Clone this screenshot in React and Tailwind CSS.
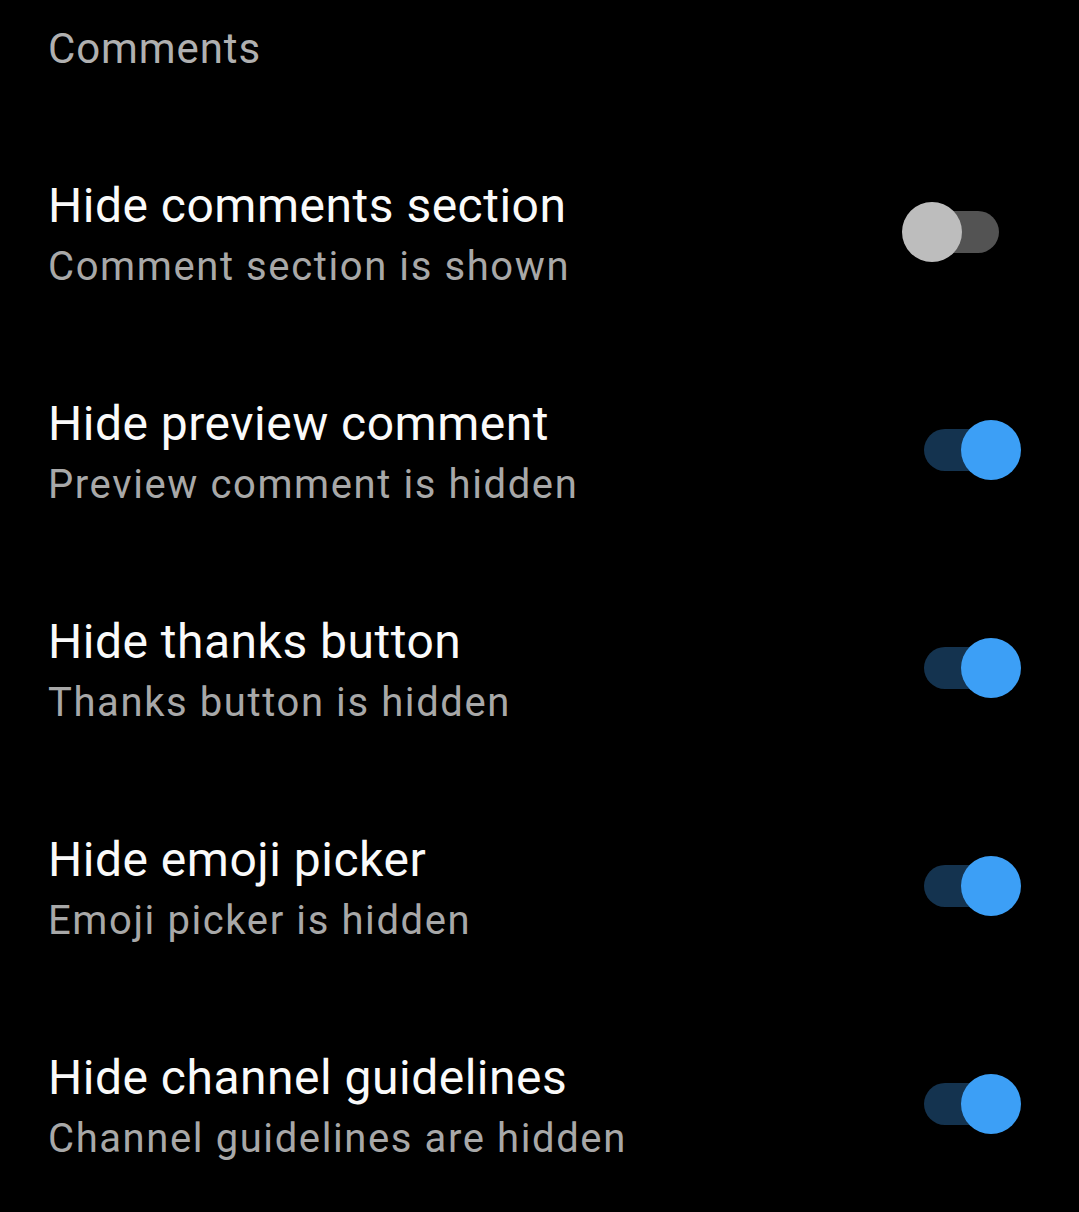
import React from "react";

const settings = [
  { title: "Hide comments section", summary: "Comment section is shown", on: false },
  { title: "Hide preview comment", summary: "Preview comment is hidden", on: true },
  { title: "Hide thanks button", summary: "Thanks button is hidden", on: true },
  { title: "Hide emoji picker", summary: "Emoji picker is hidden", on: true },
  { title: "Hide channel guidelines", summary: "Channel guidelines are hidden", on: true },
];

const Toggle = ({ on }) => (
  <div className="relative w-[119px] h-[60px] shrink-0 mt-[25px]">
    <div
      className={`absolute left-[22px] top-[9px] w-[75px] h-[42px] rounded-full ${
        on ? "bg-[#14334f]" : "bg-[#535353]"
      }`}
    />
    <div
      className={`absolute top-0 w-[60px] h-[60px] rounded-full ${
        on ? "left-[59px] bg-[#3c9ff6]" : "left-0 bg-[#bdbdbd]"
      }`}
    />
  </div>
);

export default function App() {
  return (
    <div
      className="min-h-[1212px] bg-black pl-[48px] pr-[58px]"
      style={{ fontFamily: "Roboto, 'Noto Sans', sans-serif" }}
    >
      <div className="pt-[28px] pb-[59px] text-[42px] leading-none tracking-[0.9px] text-[#b0b0b0]">
        Comments
      </div>
      {settings.map((s, i) => (
        <div key={i} className="flex items-start justify-between py-[48px]">
          <div>
            <div className="text-[48px] leading-[58px] tracking-[0.5px] text-[#fafafa]">
              {s.title}
            </div>
            <div className="text-[40px] leading-[64px] tracking-[1.6px] text-[#a8a8a8]">
              {s.summary}
            </div>
          </div>
          <Toggle on={s.on} />
        </div>
      ))}
    </div>
  );
}
